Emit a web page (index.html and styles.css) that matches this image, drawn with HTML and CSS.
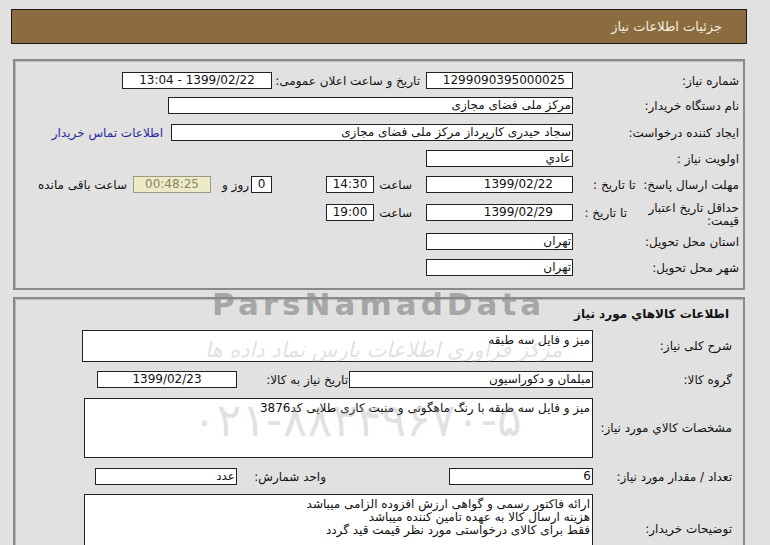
FILE: index.html
```html
<!DOCTYPE html>
<html lang="fa" dir="rtl">
<head>
<meta charset="utf-8">
<title>جزئیات اطلاعات نیاز</title>
<link rel="stylesheet" href="styles.css">
</head>
<body>
<div class="page">
  <div class="header">جزئیات اطلاعات نیاز</div>

  <div class="panel p1">
    <div class="row g8">
      <div class="lbl">شماره نیاز:</div>
      <div class="box w147 pr8">1299090395000025</div>
      <div class="lbl2 w154">تاریخ و ساعت اعلان عمومی:</div>
      <div class="box w150 center">1399/02/22 - 13:04</div>
    </div>
    <div class="row g10">
      <div class="lbl">نام دستگاه خریدار:</div>
      <div class="box w405">مرکز ملی فضای مجازی</div>
    </div>
    <div class="row g9">
      <div class="lbl">ایجاد کننده درخواست:</div>
      <div class="box w402">سجاد حیدری کارپرداز مرکز ملی فضای مجازی</div>
      <a class="link" href="#">اطلاعات تماس خریدار</a>
    </div>
    <div class="row g9">
      <div class="lbl">اولویت نیاز :</div>
      <div class="box w147">عادي</div>
    </div>
    <div class="row g11">
      <div class="lbl">مهلت ارسال پاسخ:&nbsp; تا تاریخ :</div>
      <div class="box w147 pr20">1399/02/22</div>
      <div class="lbl2 w52">ساعت</div>
      <div class="box w48 center">14:30</div>
      <div class="box w21 center gap54">0</div>
      <div class="lbl2 w40 pr2">روز و</div>
      <div class="box w78 center timer">00:48:25</div>
      <div class="tail">ساعت باقی مانده</div>
    </div>
    <div class="row g12">
      <div class="lbl split"><span class="wrap">حداقل تاریخ اعتبار قیمت:</span><span>تا تاریخ :</span></div>
      <div class="box w147 pr20">1399/02/29</div>
      <div class="lbl2 w52">ساعت</div>
      <div class="box w48 center">19:00</div>
    </div>
    <div class="row g9">
      <div class="lbl">استان محل تحویل:</div>
      <div class="box w147">تهران</div>
    </div>
    <div class="row">
      <div class="lbl">شهر محل تحویل:</div>
      <div class="box w147">تهران</div>
    </div>
  </div>

  <div class="panel p2">
    <div class="title">اطلاعات کالاهاي مورد نياز</div>
    <div class="row2 h32 g9">
      <div class="lbl l2">شرح کلی نیاز:</div>
      <div class="box area w511">میز و فایل سه طبقه</div>
    </div>
    <div class="row2 g10">
      <div class="lbl l2">گروه کالا:</div>
      <div class="box w244">مبلمان و دکوراسیون</div>
      <div class="lbl2 w112 pr1">تاریخ نیاز به کالا:</div>
      <div class="box w140 center">1399/02/23</div>
    </div>
    <div class="row2 h60 g10">
      <div class="lbl l2">مشخصات کالاي مورد نیاز:</div>
      <div class="box area w509">میز و فایل سه طبقه با رنگ ماهگونی و منبت کاری طلایی کد3876</div>
    </div>
    <div class="row2 g9">
      <div class="lbl l2">تعداد / مقدار مورد نیاز:</div>
      <div class="box w144">6</div>
      <div class="lbl2 w212 pr123">واحد شمارش:</div>
      <div class="box w142">عدد</div>
    </div>
    <div class="row2 h70">
      <div class="lbl l2">توضیحات خریدار:</div>
      <div class="box area w509">ارائه فاکتور رسمی و گواهی ارزش افزوده الزامی میباشد<br>هزینه ارسال کالا به عهده تامین کننده میباشد<br>فقط برای کالای درخواستی مورد نظر قیمت قید گردد</div>
    </div>
  </div>
</div>
<div class="wm wm-brand">ParsNamadData</div>
<div class="wm wm-cal">مرکز فراوری اطلاعات پارس نماد داده ها</div>
<div class="wm wm-phone">۰۲۱-۸۸۳۴۹۶۷۰-۵</div>
</body>
</html>
```

FILE: styles.css
```css
html, body {
  margin: 0;
  padding: 0;
  background: #e1e1e1;
  font-family: Tahoma, "DejaVu Sans", sans-serif;
  font-size: 12px;
  color: #111;
  overflow: hidden;
}

.page {
  width: 736px;
  margin-right: 23px;
  padding-top: 9px;
}

.header {
  height: 33px;
  border: 1px solid #1a1a1a;
  background: #8b6c3f;
  color: #f3ecdf;
  font-size: 13px;
  line-height: 33px;
  padding-right: 24px;
}

.panel {
  margin: 15px 2px 0 2px;
  border: 2px solid #8a8a8a;
  box-shadow: inset 1px 1px 0 #b8b8b8;
}

.p1 {
  padding: 11px 4px 12px 0;
}

.p2 {
  margin-top: 7px;
  padding: 5px 11px 0 0;
  height: 260px;
}

.row, .row2 {
  display: flex;
  align-items: center;
  height: 17px;
}

.row2.h32 { height: 32px; }
.row2.h60 { height: 60px; }
.row2.h70 { height: 70px; }

.g8 { margin-bottom: 8px; }
.g9 { margin-bottom: 9px; }
.g10 { margin-bottom: 10px; }
.g11 { margin-bottom: 11px; }
.g12 { margin-bottom: 12px; }

.lbl {
  width: 166px;
  flex: none;
  white-space: nowrap;
}

.lbl.l2 {
  width: 139px;
}

.split {
  display: flex;
  align-items: center;
}

.split .wrap {
  width: 112px;
  white-space: normal;
  line-height: 13px;
  padding-top: 4px;
}

.lbl2 {
  flex: none;
  white-space: nowrap;
  padding-right: 6px;
  box-sizing: border-box;
}

.box {
  flex: none;
  box-sizing: border-box;
  height: 17px;
  border: 1px solid #222;
  background: #fff;
  line-height: 15px;
  padding: 0 1px;
  white-space: nowrap;
  overflow: hidden;
}

.box.area {
  height: 100%;
  white-space: normal;
  line-height: 13px;
  padding: 3px 2px 0 2px;
}

.center { text-align: center; }
.pr8 { padding-right: 7px; padding-left: 0; }
.pr20 { padding-right: 19px; }
.pr2 { padding-right: 2px; }
.pr1 { padding-right: 1px; }
.pr123 { padding-right: 123px; }
.gap54 { margin-right: 54px; }

.w21 { width: 21px; }
.w40 { width: 40px; }
.w48 { width: 48px; }
.w52 { width: 52px; padding-right: 14px; }
.w78 { width: 78px; }
.w112 { width: 112px; }
.w140 { width: 140px; }
.w142 { width: 142px; }
.w144 { width: 144px; }
.w147 { width: 147px; }
.w150 { width: 150px; }
.w154 { width: 154px; }
.w212 { width: 212px; }
.w244 { width: 244px; }
.w402 { width: 402px; }
.w405 { width: 405px; }
.w509 { width: 509px; }
.w511 { width: 511px; }

.timer {
  background: #ecebc6;
  border-color: #9a9a86;
  color: #8a8766;
}

.tail {
  margin-right: 6px;
  white-space: nowrap;
}

.link {
  margin-right: 8px;
  color: #2a2aa0;
  text-decoration: none;
  white-space: nowrap;
}

.title {
  font-weight: bold;
  margin-right: 3px;
  line-height: 16px;
  height: 16px;
  margin-bottom: 8px;
  margin-top: 2px;
}

.wm {
  position: absolute;
  pointer-events: none;
  white-space: nowrap;
}

.wm-brand {
  left: 212px;
  top: 288px;
  font-family: "DejaVu Sans", sans-serif;
  font-weight: bold;
  font-size: 31px;
  line-height: 32px;
  letter-spacing: 4px;
  color: rgba(140, 140, 140, 0.7);
}

.wm-cal {
  left: 205px;
  top: 338px;
  font-family: "DejaVu Sans", sans-serif;
  font-style: italic;
  font-size: 21px;
  color: rgba(150, 150, 150, 0.3);
}

.wm-phone {
  left: 192px;
  top: 394px;
  font-family: "DejaVu Sans", sans-serif;
  font-size: 46px;
  line-height: 52px;
  color: rgba(150, 150, 150, 0.28);
  direction: ltr;
}
```
